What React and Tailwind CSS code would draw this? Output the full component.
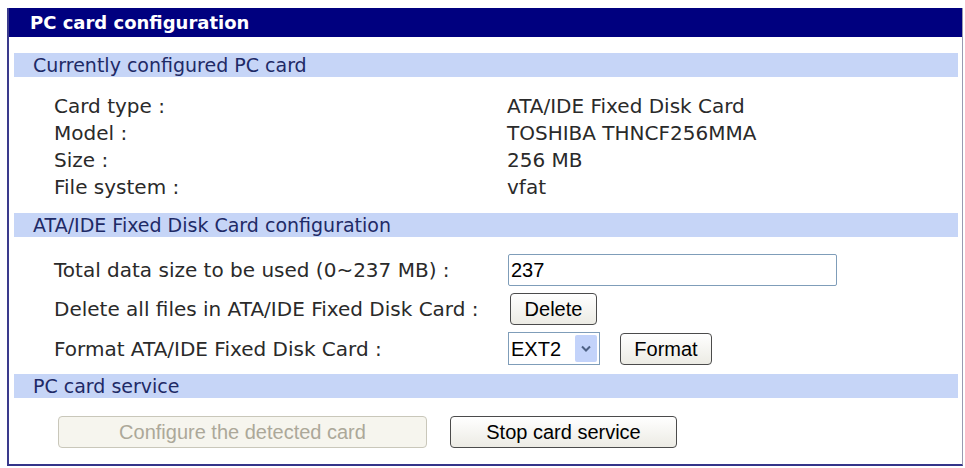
import React from "react";

const labelFont = "font-['DejaVu_Sans',Verdana,sans-serif]";
const btnFont = "font-['Liberation_Sans',Arial,sans-serif]";

const Band = ({ children }) => (
    <div className={`h-[24px] bg-[#c6d5f7] pl-[19px] flex items-center text-[19px] text-[#1e2a66] ${labelFont}`}>
        {children}
    </div>
)

const XpButton = ({ children, disabled, className = '' }) => (
    <button
        disabled={disabled}
        className={`h-[32px] rounded-[4px] border text-[20px] ${btnFont} flex items-center justify-center ${disabled
            ? 'border-[#c9c7ba] bg-[#f6f5ee] text-[#aca899]'
            : 'border-[#4b4b4b] bg-gradient-to-b from-white to-[#ecebe4] text-black'} ${className}`}>
        {children}
    </button>
)

const info = [
    ['Card type :', 'ATA/IDE Fixed Disk Card'],
    ['Model :', 'TOSHIBA THNCF256MMA'],
    ['Size :', '256 MB'],
    ['File system :', 'vfat'],
]

export default function App() {
    return <div className="w-[965px] h-[468px] bg-white pt-[8px] pl-[7px]">
        <div className="w-[956px] h-[458px] border-l-2 border-b-2 border-r border-l-[#3a3a8c] border-b-[#34348a] border-r-[#9a9ab0] flex flex-col">
            <div className={`h-[29px] bg-[#00007f] pl-[21px] flex items-center text-white font-bold text-[18px] ${labelFont}`}>
                PC card configuration
            </div>
            <div className="flex-1 pl-[5px] pr-[4px] pt-[16px]">
                <Band>Currently configured PC card</Band>
                <div className={`pt-[15px] pb-[13px] text-[20px] text-[#2a2a2a] ${labelFont}`}>
                    {info.map(([k, v]) => (
                        <div key={k} className="flex h-[27px] items-center">
                            <div className="w-[493px] pl-[40px]">{k}</div>
                            <div>{v}</div>
                        </div>
                    ))}
                </div>
                <Band>ATA/IDE Fixed Disk Card configuration</Band>
                <div className={`pt-[17px] pb-[9px] text-[20px] text-[#2a2a2a] ${labelFont} flex flex-col gap-[7px]`}>
                    <div className="flex items-center h-[32px]">
                        <div className="w-[494px] pl-[40px]">Total data size to be used (0~237 MB) :</div>
                        <input
                            defaultValue="237"
                            className={`w-[329px] h-[32px] border border-[#7f9db9] rounded-[2px] px-[2px] text-[20px] text-black ${btnFont} outline-none`}
                        />
                    </div>
                    <div className="flex items-center h-[32px]">
                        <div className="w-[496px] pl-[40px]">Delete all files in ATA/IDE Fixed Disk Card :</div>
                        <XpButton className="w-[87px]">Delete</XpButton>
                    </div>
                    <div className="flex items-center h-[33px]">
                        <div className="w-[494px] pl-[40px]">Format ATA/IDE Fixed Disk Card :</div>
                        <div className={`w-[92px] h-[33px] border border-[#7f9db9] flex items-center justify-between pl-[2px] pr-[2px] text-[20px] text-black ${btnFont}`}>
                            <span>EXT2</span>
                            <span className="w-[22px] h-[27px] bg-[#c3d3fa] rounded-[2px] flex items-center justify-center">
                                <svg width="10" height="7" viewBox="0 0 10 7">
                                    <path d="M1 1.5 L5 5.5 L9 1.5" fill="none" stroke="#4d6185" strokeWidth="2" />
                                </svg>
                            </span>
                        </div>
                        <XpButton className="w-[92px] ml-[20px]">Format</XpButton>
                    </div>
                </div>
                <Band>PC card service</Band>
                <div className="flex items-center pt-[18px] pl-[44px]">
                    <XpButton disabled className="w-[369px]">Configure the detected card</XpButton>
                    <XpButton className="w-[227px] ml-[23px]">Stop card service</XpButton>
                </div>
            </div>
        </div>
    </div>
}
